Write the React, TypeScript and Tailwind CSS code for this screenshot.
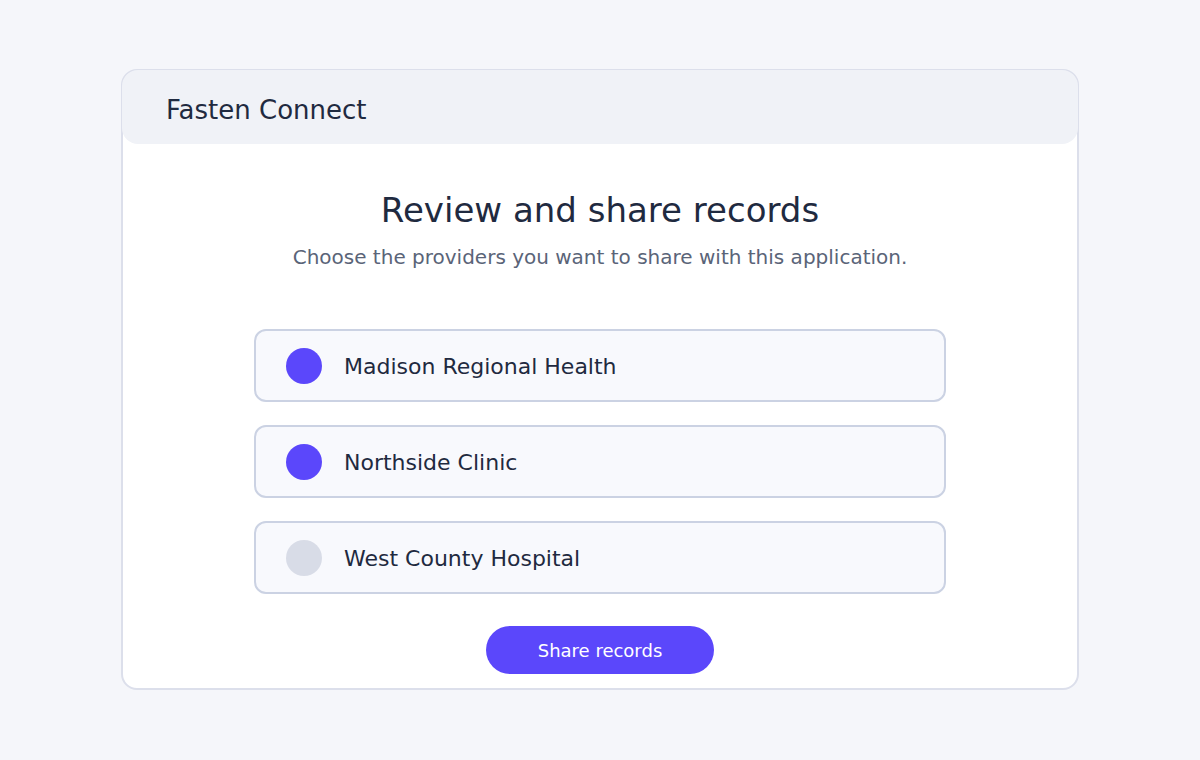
import React from "react";

const providers = [
  { name: "Madison Regional Health", on: true },
  { name: "Northside Clinic", on: true },
  { name: "West County Hospital", on: false },
];

export default function App() {
  return (
    <div
      className="min-h-[760px] w-full bg-[#f5f6fa] pt-[69px]"
      style={{ fontFamily: '"DejaVu Sans", sans-serif' }}
    >
      <div className="mx-auto flex w-[958px] flex-col rounded-2xl border-2 border-[#dcdfeb] bg-white">
        <div className="-mx-px -mt-px flex h-[74px] items-center rounded-2xl bg-[#f0f2f7] pl-[44px] pt-[6px]">
          <span className="text-[26px] text-[#1f2a40]">Fasten Connect</span>
        </div>
        <div className="flex flex-col items-center pt-[46px] pb-[14px]">
          <h1 className="text-[34px] leading-[41px] text-[#1f2a40]">Review and share records</h1>
          <p className="mt-[13px] text-[20px] leading-[27px] text-[#5a6478]">
            Choose the providers you want to share with this application.
          </p>
          <div className="mt-[58px] flex w-[692px] flex-col gap-[23px]">
            {providers.map((p) => (
              <div
                key={p.name}
                className="flex h-[73px] items-center gap-[22px] rounded-xl border-2 border-[#cbd2e3] bg-[#f8f9fd] pl-[30px]"
              >
                <span
                  className={
                    p.on
                      ? "h-9 w-9 rounded-full bg-[#5b47fb]"
                      : "h-9 w-9 rounded-full bg-[#d8dce7]"
                  }
                />
                <span className="pt-[2px] text-[22px] text-[#1f2a40]">{p.name}</span>
              </div>
            ))}
          </div>
          <button className="mt-8 h-12 w-[228px] rounded-full bg-[#5b47fb] text-[18px] text-white">
            Share records
          </button>
        </div>
      </div>
    </div>
  );
}
